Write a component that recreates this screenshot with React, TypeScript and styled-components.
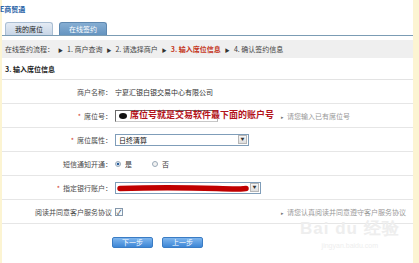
import React from 'react'
import styled, { createGlobalStyle } from 'styled-components'

const GlobalStyle = createGlobalStyle`
  html, body {
    margin: 0;
    padding: 0;
    background: #fcf4d2;
  }
  body {
    font-family: 'Noto Sans CJK SC', 'Noto Sans', sans-serif;
    color: #444444;
  }
`

const Frame = styled.div`
  position: relative;
  width: 419px;
  height: 263px;
  overflow: hidden;
  background: #fcf4d2;
`

const Panel = styled.div`
  margin: 0 6px 0 2px;
  height: 100%;
  background: #ffffff;
  display: flex;
  flex-direction: column;
`

const Title = styled.div`
  height: 20px;
  padding: 4px 0 0 0;
  margin-left: -2px;
  box-sizing: border-box;
  font-size: 7px;
  font-weight: bold;
  color: #2a63a6;
  line-height: 10px;
`

const TabBar = styled.div`
  display: flex;
  align-items: flex-end;
  gap: 6px;
  height: 15px;
  padding-left: 3px;
  border-bottom: 1px solid #7b9cb4;
`

const Tab = styled.div<{ $active?: boolean }>`
  width: 48px;
  height: 13px;
  box-sizing: border-box;
  border: 1px solid ${p => (p.$active ? '#5e88b0' : '#aabed3')};
  border-bottom: none;
  border-radius: 3px 3px 0 0;
  background: ${p =>
    p.$active
      ? 'linear-gradient(#86aed3, #6594c0)'
      : 'linear-gradient(#e4ebf4, #c7d5e6)'};
  color: ${p => (p.$active ? '#ffffff' : '#222222')};
  font-size: 7px;
  line-height: 12px;
  text-align: center;
`

const Steps = styled.div`
  margin-top: 4px;
  height: 18px;
  display: flex;
  align-items: center;
  gap: 4px;
  padding-left: 3px;
  background: #efefef;
  font-size: 7px;
  color: #444444;
  white-space: nowrap;
`

const Arrow = styled.span`
  font-size: 5px;
  color: #333333;
`

const Step = styled.span<{ $current?: boolean }>`
  color: ${p => (p.$current ? '#c4351b' : '#444444')};
  font-weight: ${p => (p.$current ? 'bold' : 'normal')};
`

const SectionTitle = styled.div`
  height: 22px;
  display: flex;
  align-items: flex-end;
  padding: 0 0 5px 3px;
  box-sizing: border-box;
  border-bottom: 1px solid #e3e3e3;
  font-size: 7px;
  font-weight: bold;
  color: #222222;
`

const Row = styled.div`
  display: grid;
  grid-template-columns: 110px 163px 1fr;
  column-gap: 3px;
  align-items: center;
  height: 24px;
  box-sizing: border-box;
  border-bottom: 1px solid #e6e6e6;
  font-size: 7px;
`

const Label = styled.div`
  text-align: right;
  color: #4a4a4a;
  white-space: nowrap;
`

const Star = styled.span`
  color: #d23a2a;
  margin-right: 3px;
`

const Value = styled.div`
  display: flex;
  align-items: center;
  white-space: nowrap;
  color: #333333;
`

const Hint = styled.div`
  color: #999999;
  white-space: nowrap;
  &::before {
    content: '▸';
    font-size: 5px;
    margin-right: 3px;
    color: #777777;
  }
`

const TextBox = styled.div`
  position: relative;
  width: 103px;
  height: 12px;
  box-sizing: border-box;
  border: 1px solid #6a6a6a;
  border-right-color: #b8b8b8;
  border-bottom-color: #c8c8c8;
  background: #ffffff;
`

const Blob = styled.span`
  position: absolute;
  left: 3px;
  top: 2px;
  width: 8px;
  height: 6px;
  border-radius: 50%;
  background: #111111;
`

const Note = styled.span`
  position: absolute;
  left: 14px;
  top: -3px;
  font-size: 9px;
  font-weight: bold;
  color: #b3121a;
  white-space: nowrap;
`

const Select = styled.div<{ $width: number }>`
  position: relative;
  width: ${p => p.$width}px;
  height: 12px;
  box-sizing: border-box;
  border: 1px solid #7f9db9;
  background: #ffffff;
  display: flex;
  align-items: center;
  padding-left: 3px;
  color: #111111;
`

const SelectText = styled.span`
  flex: 1;
`

const DropButton = styled.span`
  width: 9px;
  height: 9px;
  margin-right: 1px;
  box-sizing: border-box;
  border: 1px solid #b7b7b7;
  background: linear-gradient(#f7f7f7, #dedede);
  font-size: 4px;
  line-height: 7px;
  text-align: center;
  color: #333333;
`

const Scribble = styled.svg`
  position: absolute;
  left: 1px;
  top: 1px;
`

const Radio = styled.span<{ $checked?: boolean }>`
  display: inline-block;
  width: 6px;
  height: 6px;
  border-radius: 50%;
  box-sizing: border-box;
  border: 1px solid #9aa9b8;
  background: ${p =>
    p.$checked
      ? 'radial-gradient(circle, #2b5f9c 0 1.3px, #dfe8f2 1.6px)'
      : '#f2f2f2'};
  margin-right: 4px;
`

const RadioText = styled.span`
  margin-right: 20px;
`

const Check = styled.span`
  display: inline-block;
  width: 8px;
  height: 8px;
  box-sizing: border-box;
  border: 1px solid #8497ab;
  background: #f7f9fb;
  font-size: 7px;
  line-height: 6px;
  text-align: center;
  color: #333333;
`

const Buttons = styled.div`
  display: flex;
  gap: 9px;
  padding: 13px 0 0 110px;
`

const Button = styled.div`
  width: 41px;
  height: 11px;
  box-sizing: border-box;
  border: 1px solid #3a7cc4;
  border-radius: 2px;
  background: linear-gradient(#7fb6ee, #3d86d6);
  color: #ffffff;
  font-size: 7px;
  line-height: 9px;
  text-align: center;
`

const Watermark = styled.div`
  position: absolute;
  left: 300px;
  top: 220px;
  color: #eeeeee;
  font-family: 'Liberation Sans', sans-serif;
  text-align: center;
  pointer-events: none;
`

const MarkBig = styled.div`
  font-size: 17px;
  font-weight: bold;
  line-height: 18px;
  letter-spacing: 1px;
`

const MarkSmall = styled.div`
  font-size: 7px;
  margin-top: 4px;
`

const App: React.FC = () => (
  <Frame>
    <GlobalStyle />
    <Panel>
      <Title>E商贸通</Title>
      <TabBar>
        <Tab>我的席位</Tab>
        <Tab $active>在线签约</Tab>
      </TabBar>
      <Steps>
        <span>在线签约流程：</span>
        <Arrow>▶</Arrow>
        <Step>1. 商户查询</Step>
        <Arrow>▶</Arrow>
        <Step>2. 请选择商户</Step>
        <Arrow>▶</Arrow>
        <Step $current>3. 输入席位信息</Step>
        <Arrow>▶</Arrow>
        <Step>4. 确认签约信息</Step>
      </Steps>
      <SectionTitle>3. 输入席位信息</SectionTitle>
      <Row>
        <Label>商户名称：</Label>
        <Value>宁夏汇银白银交易中心有限公司</Value>
      </Row>
      <Row>
        <Label>
          <Star>*</Star>席位号：
        </Label>
        <Value>
          <TextBox>
            <Blob />
            <Note>席位号就是交易软件最下面的账户号</Note>
          </TextBox>
        </Value>
        <Hint>请您输入已有席位号</Hint>
      </Row>
      <Row>
        <Label>
          <Star>*</Star>席位属性：
        </Label>
        <Value>
          <Select $width={134}>
            <SelectText>日终清算</SelectText>
            <DropButton>▼</DropButton>
          </Select>
        </Value>
      </Row>
      <Row>
        <Label>短信通知开通：</Label>
        <Value>
          <Radio $checked />
          <RadioText>是</RadioText>
          <Radio />
          <RadioText>否</RadioText>
        </Value>
      </Row>
      <Row>
        <Label>
          <Star>*</Star>指定银行账户：
        </Label>
        <Value>
          <Select $width={146}>
            <SelectText />
            <Scribble width="132" height="9" viewBox="0 0 132 9">
              <path
                d="M3 4.5 C 30 3.5, 70 3.5, 100 4.5 S 124 4.5, 129 4.5"
                stroke="#c00000"
                strokeWidth="5.5"
                strokeLinecap="round"
                fill="none"
              />
            </Scribble>
            <DropButton>▼</DropButton>
          </Select>
        </Value>
      </Row>
      <Row>
        <Label>阅读并同意客户服务协议</Label>
        <Value>
          <Check>✓</Check>
        </Value>
        <Hint>请您认真阅读并同意遵守客户服务协议</Hint>
      </Row>
      <Buttons>
        <Button>下一步</Button>
        <Button>上一步</Button>
      </Buttons>
    </Panel>
    <Watermark>
      <MarkBig>Bai du 经验</MarkBig>
      <MarkSmall>jingyan.baidu.com</MarkSmall>
    </Watermark>
  </Frame>
)

export default App
